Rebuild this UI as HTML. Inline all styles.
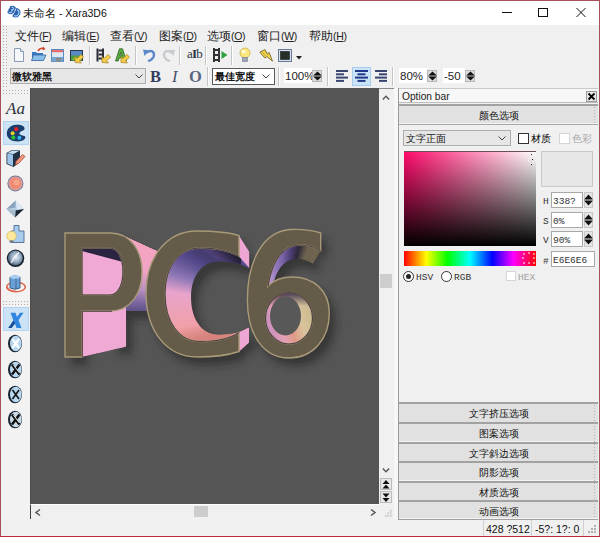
<!DOCTYPE html>
<html><head><meta charset="utf-8">
<style>
*{box-sizing:border-box;margin:0;padding:0}
html,body{width:600px;height:537px;overflow:hidden;background:#f0f0f0;font-family:"Liberation Sans",sans-serif;color:#000}
.a{position:absolute}
svg{position:absolute;overflow:visible}
.t{position:absolute;white-space:nowrap;font-size:12px;line-height:14px}
.sep{position:absolute;width:2px;height:19px;border-left:1px solid #c5c5c5;border-right:1px solid #fff}
.m{font-size:10.5px;letter-spacing:-0.3px}
.grip{position:absolute}
.btn{position:absolute;left:399px;width:198px;height:20px;background:#e3e3e3;border-top:2px solid #a8a8a8;text-align:center;font-size:12px;line-height:17px;color:#111}
.sp{position:absolute;width:10px;height:12px;background:#dcdcdc;border:1px solid #b8b8b8}
.fld{position:absolute;background:#fff;border:1px solid #a8a8a8;font-family:"Liberation Mono",monospace;font-size:9.5px;line-height:14px;padding-left:1px;padding-top:2px;color:#333}
.lbtn{position:absolute;left:398px;width:200px;height:20px;background:#e1e1e1;border-top:2px solid #a2a2a2;border-left:1px solid #9a9a9a;text-align:center;font-size:10px;line-height:19px;color:#111;font-weight:500;box-shadow:inset 0 -1px 0 #f4f4f4}
</style></head><body>
<svg width="0" height="0" style="position:absolute"><defs>
<pattern id="gp" width="3" height="3" patternUnits="userSpaceOnUse"><rect width="1" height="1" fill="#b0b0b0"/></pattern>
<symbol id="spin" viewBox="0 0 9 12"><path d="M4.5 0.5 L8.5 5 H0.5Z" fill="#111"/><rect x="0.5" y="5.5" width="8" height="1" fill="#111"/><path d="M0.5 7 H8.5 L4.5 11.5Z" fill="#111"/></symbol>
</defs></svg>
<!-- window border -->
<div class="a" style="left:0;top:0;width:600px;height:537px;border:1px solid #a8505a;border-bottom-color:#c02a3a;z-index:50"></div>

<!-- ============ TITLE BAR ============ -->
<div class="a" style="left:1px;top:1px;width:598px;height:24px;background:#fff"></div>
<svg style="left:6px;top:5px" width="16" height="14" viewBox="0 0 16 14">
  <g transform="rotate(30 8 7)">
  <path d="M2 3.5 Q4 1.5 7 2 Q8.5 3 7.5 5 Q9 6 8 8.5 Q6.5 11.5 3 11 Q1.5 10 2.5 8.5 Q1 7 2.5 5.5 Q1 4.5 2 3.5Z" fill="#2a5fae"/>
  <path d="M8 2 Q14 1 14.5 6.5 Q14.5 12 8.5 11.5 Q9.5 7 8 2Z" fill="#2a5fae"/>
  <path d="M3.5 4 Q6 3.2 6 4.8 Q5.8 6 4.5 6.3 Q6.3 6.6 6 8.2 Q5.5 10 3.5 9.5" stroke="#a8d4f4" stroke-width="1.1" fill="none"/>
  <path d="M9.5 3.5 Q13 3.5 13 6.8 Q13 10 10 10" stroke="#a8d4f4" stroke-width="1.1" fill="none"/>
  </g>
</svg>
<div class="t" style="left:23px;top:6px;font-size:10.5px;color:#111">未命名 - Xara3D6</div>
<!-- window controls -->
<div class="a" style="left:502px;top:12px;width:10px;height:1px;background:#111"></div>
<div class="a" style="left:538px;top:8px;width:10px;height:9px;border:1px solid #111"></div>
<svg style="left:576px;top:8px" width="10" height="9" viewBox="0 0 10 9"><path d="M0.5 0 L9.5 9 M9.5 0 L0.5 9" stroke="#111" stroke-width="1"/></svg>

<!-- ============ MENU BAR ============ -->
<svg style="left:3px;top:26px" width="4" height="62"><rect width="4" height="62" fill="url(#gp)"/></svg>
<div class="t" style="left:15px;top:29px;color:#222;font-size:11.5px">文件<span class="m">(<u>F</u>)</span></div>
<div class="t" style="left:62px;top:29px;color:#222;font-size:11.5px">编辑<span class="m">(<u>E</u>)</span></div>
<div class="t" style="left:110px;top:29px;color:#222;font-size:11.5px">查看<span class="m">(<u>V</u>)</span></div>
<div class="t" style="left:159px;top:29px;color:#222;font-size:11.5px">图案<span class="m">(<u>D</u>)</span></div>
<div class="t" style="left:207px;top:29px;color:#222;font-size:11.5px">选项<span class="m">(<u>O</u>)</span></div>
<div class="t" style="left:257px;top:29px;color:#222;font-size:11.5px">窗口<span class="m">(<u>W</u>)</span></div>
<div class="t" style="left:309px;top:29px;color:#222;font-size:11.5px">帮助<span class="m">(<u>H</u>)</span></div>

<!-- ============ TOOLBAR 1 ============ -->
<svg style="left:13px;top:48px" width="12" height="15" viewBox="0 0 12 15">
  <path d="M1.5 0.5 H7.5 L10.5 3.5 V13.5 H1.5Z" fill="#f4f8fc" stroke="#8a9ab0"/>
  <path d="M7.5 0.5 V3.5 H10.5" fill="#dde6f0" stroke="#8a9ab0"/>
</svg>
<svg style="left:31px;top:47px" width="16" height="15" viewBox="0 0 16 15">
  <path d="M1 5 H5 L6 6 H12 V13.5 H1Z" fill="#3a7ac0"/>
  <path d="M2.5 8 H15 L12.5 13.5 H0.5Z" fill="#8ac0ea" stroke="#3a6aa0" stroke-width="0.8"/>
  <path d="M7 4 Q9 0.5 13 1.5" stroke="#d04830" stroke-width="1.6" fill="none"/>
  <path d="M12 -0.5 L14.5 2 L11.5 3.5Z" fill="#d04830"/>
</svg>
<svg style="left:51px;top:49px" width="14" height="14" viewBox="0 0 14 14">
  <rect x="0.5" y="0.5" width="12" height="12" fill="#dfe9f4" stroke="#5a8cc0"/>
  <rect x="1" y="1" width="11" height="2.2" fill="#e86a6a"/>
  <rect x="1" y="8" width="11" height="4.5" fill="#78a4d0"/>
  <rect x="5" y="9" width="5" height="3.5" fill="#8a8a8a"/>
</svg>
<svg style="left:70px;top:50px" width="15" height="13" viewBox="0 0 15 13">
  <rect x="0.5" y="0.5" width="12" height="10" fill="#4aa040" stroke="#2a3a48"/>
  <rect x="1" y="1" width="11" height="4.5" fill="#5a88c8"/>
  <path d="M1 10.5 L5 6 L8 9 L12 5 V10.5Z" fill="#70b848"/>
  <path d="M5 12.5 V6.5 L7 8.5 L11 4.5 L13.5 7 L9.5 11 L11.5 13Z" fill="#f6cc48" stroke="#a08020" stroke-width="0.7"/>
</svg>
<div class="sep" style="left:89px;top:46px"></div>
<svg style="left:96px;top:48px" width="16" height="15" viewBox="0 0 16 15">
  <rect x="0.5" y="0.5" width="2" height="13" fill="#2a2f38"/>
  <rect x="6" y="0.5" width="2" height="13" fill="#2a2f38"/>
  <rect x="2.5" y="1.5" width="3.5" height="2" fill="#2a2f38"/><rect x="2.5" y="5.5" width="3.5" height="2" fill="#2a2f38"/><rect x="2.5" y="9.5" width="3.5" height="2" fill="#2a2f38"/>
  <path d="M6 14.5 V8.5 L8 10.5 L12 6.5 L14.5 9 L10.5 13 L12.5 15Z" fill="#f6cc48" stroke="#a08020" stroke-width="0.7"/>
</svg>
<svg style="left:115px;top:48px" width="16" height="15" viewBox="0 0 16 15">
  <path d="M0.5 13 L4.5 0.8 H7.5 L11.5 13 H8.8 L7.8 10 H4.2 L3.2 13Z M4.8 7.8 H7.2 L6 4Z" fill="#5cb040" stroke="#2a5a20" stroke-width="0.8"/>
  <path d="M6 14.5 V8.5 L8 10.5 L12 6.5 L14.5 9 L10.5 13 L12.5 15Z" fill="#f6cc48" stroke="#a08020" stroke-width="0.7"/>
</svg>
<div class="sep" style="left:135px;top:46px"></div>
<svg style="left:142px;top:48px" width="14" height="14" viewBox="0 0 14 14">
  <path d="M4 5 Q7.5 2 10.5 3.5 Q13 5.5 11.5 9 Q10 12 6 13" stroke="#5a88c8" stroke-width="2.3" fill="none"/>
  <path d="M1 1.5 L7 2.5 L2.5 8Z" fill="#5a88c8"/>
</svg>
<svg style="left:162px;top:48px" width="14" height="14" viewBox="0 0 14 14">
  <path d="M10 5 Q6.5 2 3.5 3.5 Q1 5.5 2.5 9 Q4 12 8 13" stroke="#c8ccd0" stroke-width="2.3" fill="none"/>
  <path d="M13 1.5 L7 2.5 L11.5 8Z" fill="#c8ccd0"/>
</svg>
<div class="sep" style="left:179px;top:46px"></div>
<div class="t" style="left:187px;top:47px;font-family:'Liberation Serif',serif;font-size:13px;color:#2a3444;letter-spacing:-0.8px">a<span style="font-weight:bold">I</span>b</div>
<div class="sep" style="left:205px;top:46px"></div>
<svg style="left:213px;top:48px" width="15" height="14" viewBox="0 0 15 14">
  <rect x="0" y="0" width="2" height="14" fill="#333"/><rect x="5" y="0" width="2" height="14" fill="#333"/>
  <rect x="2" y="1" width="3" height="2" fill="#333"/><rect x="2" y="6" width="3" height="2" fill="#333"/><rect x="2" y="11" width="3" height="2" fill="#333"/>
  <path d="M8.5 3 L14.5 7 L8.5 11Z" fill="#30a040"/>
</svg>
<div class="sep" style="left:231px;top:46px"></div>
<svg style="left:239px;top:47px" width="12" height="16" viewBox="0 0 12 16">
  <circle cx="6" cy="6" r="5" fill="#fbe880" stroke="#c8b040" stroke-width="0.8"/>
  <ellipse cx="4.5" cy="4.5" rx="2" ry="1.6" fill="#fffbe0"/>
  <rect x="3.5" y="10.5" width="5" height="4" fill="#a0a8b8" stroke="#707888" stroke-width="0.6"/>
</svg>
<svg style="left:259px;top:49px" width="15" height="13" viewBox="0 0 15 13">
  <path d="M0.8 3.2 L6 0.6 L8.2 4.6 L10.2 3.4 L13.5 12.2 L8 7.6 L5.8 9Z" fill="#f4d648" stroke="#6a5a28" stroke-width="0.8" stroke-linejoin="round"/>
  <path d="M3 3 L7 7.5 M6 2 L9.5 6.5" stroke="#8a7a40" stroke-width="0.6"/>
</svg>
<svg style="left:278px;top:49px" width="14" height="13" viewBox="0 0 14 13">
  <rect x="0.5" y="0.5" width="13" height="12" fill="#d4e0ee" stroke="#6a7a90"/>
  <rect x="2.5" y="2.5" width="9" height="8" fill="#263028" stroke="#1a1f24" stroke-width="0.6"/>
</svg>
<svg style="left:296px;top:56px" width="6" height="4" viewBox="0 0 6 4"><path d="M0 0 H6 L3 3.5Z" fill="#222"/></svg>

<!-- ============ TOOLBAR 2 ============ -->
<div class="a" style="left:10px;top:68px;width:136px;height:16px;background:#e6e6e6;border:1px solid #adadad"></div>
<div class="t" style="left:12px;top:70px;font-size:10px;font-weight:bold;color:#111">微软雅黑</div>
<svg style="left:135px;top:74px" width="8" height="5" viewBox="0 0 8 5"><path d="M0.5 0.5 L4 4 L7.5 0.5" stroke="#444" stroke-width="1" fill="none"/></svg>

<div class="t" style="left:150px;top:68px;font-family:'Liberation Serif',serif;font-size:16.5px;line-height:18px;font-weight:bold;color:#333c5c">B</div>
<div class="t" style="left:172px;top:68px;font-family:'Liberation Serif',serif;font-size:16.5px;line-height:18px;font-style:italic;color:#454f68">I</div>
<div class="t" style="left:189px;top:68px;font-family:'Liberation Serif',serif;font-size:16.5px;line-height:18px;font-weight:bold;color:#5a6580">O</div>
<div class="sep" style="left:207px;top:67px"></div>
<div class="a" style="left:212px;top:68px;width:63px;height:17px;background:#fff;border:1px solid #5a5a5a"></div>
<div class="t" style="left:215px;top:70px;font-size:10px;font-weight:bold;color:#111">最佳宽度</div>
<svg style="left:262px;top:74px" width="8" height="5" viewBox="0 0 8 5"><path d="M0.5 0.5 L4 4 L7.5 0.5" stroke="#444" stroke-width="1" fill="none"/></svg>
<div class="sep" style="left:278px;top:67px"></div>
<div class="a" style="left:284px;top:68px;width:28px;height:15px;background:#fff"></div>
<div class="t" style="left:285px;top:69px;font-size:11.5px;color:#222">100%</div>
<div class="sp" style="left:312px;top:70px"></div>
<svg style="left:313px;top:71px" width="9" height="10" viewBox="0 0 9 12" preserveAspectRatio="none"><use href="#spin"/></svg>
<div class="sep" style="left:327px;top:67px"></div>
<svg style="left:336px;top:70px" width="12" height="12" viewBox="0 0 12 12">
  <g fill="#3a4670"><rect x="0" y="0" width="12" height="2"/><rect x="0" y="3.3" width="8" height="2"/><rect x="0" y="6.6" width="12" height="2"/><rect x="0" y="9.9" width="8" height="2"/></g>
</svg>
<div class="a" style="left:352px;top:67px;width:19px;height:19px;background:#cce4f7;border:1px solid #a6cdef"></div>
<svg style="left:355px;top:70px" width="13" height="12" viewBox="0 0 13 12">
  <g fill="#1f3a8a"><rect x="0" y="0" width="13" height="2"/><rect x="2.5" y="3.3" width="8" height="2"/><rect x="0" y="6.6" width="13" height="2"/><rect x="2.5" y="9.9" width="8" height="2"/></g>
</svg>
<svg style="left:375px;top:70px" width="12" height="12" viewBox="0 0 12 12">
  <g fill="#3a4670"><rect x="0" y="0" width="12" height="2"/><rect x="4" y="3.3" width="8" height="2"/><rect x="0" y="6.6" width="12" height="2"/><rect x="4" y="9.9" width="8" height="2"/></g>
</svg>
<div class="sep" style="left:392px;top:67px"></div>
<div class="a" style="left:399px;top:68px;width:28px;height:15px;background:#fff"></div>
<div class="t" style="left:400px;top:69px;font-size:11.5px;color:#222">80%</div>
<div class="sp" style="left:427px;top:70px"></div>
<svg style="left:428px;top:71px" width="9" height="10" viewBox="0 0 9 12" preserveAspectRatio="none"><use href="#spin"/></svg>
<div class="a" style="left:443px;top:68px;width:22px;height:15px;background:#fff"></div>
<div class="t" style="left:444px;top:69px;font-size:11.5px;color:#222">-50</div>
<div class="sp" style="left:465px;top:70px"></div>
<svg style="left:466px;top:71px" width="9" height="10" viewBox="0 0 9 12" preserveAspectRatio="none"><use href="#spin"/></svg>

<!-- ============ LEFT TOOLBAR ============ -->
<div class="a" style="left:1px;top:88px;width:29px;height:431px;background:#f2f2f2"></div>
<svg style="left:3px;top:90px" width="26" height="6"><rect width="26" height="6" fill="url(#gp)"/></svg>
<div class="t" style="left:6px;top:100px;font-family:'Liberation Serif',serif;font-style:italic;font-size:17px;line-height:18px;color:#2a2f3a">Aa</div>
<div class="a" style="left:3px;top:121px;width:26px;height:24px;background:#cce2f5;border:1px solid #b2d4f0"></div>
<svg style="left:6px;top:124px" width="21" height="18" viewBox="0 0 21 18">
  <path d="M10 0.8 C15 0.3 19 2 18.5 5 C18 7 14 7 13.5 9 C13 11 16 11 18.5 12 C21 13.5 18 17.5 12 17.5 C5 17.5 0.8 14 0.8 9.5 C0.8 4.5 5 1.2 10 0.8Z" fill="#1b3e6e"/>
  <circle cx="10.2" cy="5.2" r="2.1" fill="#e8202a"/>
  <circle cx="6.6" cy="9.3" r="2" fill="#e6d030"/>
  <circle cx="7.3" cy="13.6" r="2.1" fill="#28c030"/>
  <circle cx="13.4" cy="13.8" r="2" fill="#30b8f0"/>
</svg>
<svg style="left:6px;top:149px" width="20" height="19" viewBox="0 0 20 19">
  <path d="M0.5 4 L6 1 L14 1.5 L14 13 L7.5 18 L0.5 15Z" fill="#1f2f44"/>
  <path d="M1.3 4.6 L7 5.5 L7 17 L1.3 14.6Z" fill="#9cc4e8"/>
  <path d="M1.3 4.2 L6.2 1.6 L13 2 L7.5 5Z" fill="#c8def2"/>
  <path d="M10 12.5 L16.5 5.5 L19 7.5 L12.5 14.5 L9.5 15.5Z" fill="#f29a80" stroke="#a84a3a" stroke-width="0.8"/>
</svg>
<svg style="left:6px;top:175px" width="18" height="17" viewBox="0 0 18 17">
  <circle cx="9.4" cy="8.4" r="8" fill="#7c6f88"/>
  <circle cx="9.4" cy="8.4" r="7" fill="#c8b8c8"/>
  <circle cx="9.4" cy="8.4" r="6.2" fill="#f08a72"/>
  <circle cx="10.5" cy="7.5" r="3" fill="#f6a48a"/>
</svg>
<svg style="left:6px;top:200px" width="19" height="18" viewBox="0 0 19 18">
  <path d="M9.5 0.5 L18 9 L9 17.5 L0.5 9Z" fill="#b8cce0"/>
  <path d="M9.5 0.5 L18 9 L11 9.5Z" fill="#dce8f4"/>
  <path d="M0.5 9 L9.5 7.5 L9.5 0.5Z" fill="#8aa4c0"/>
  <path d="M18 9 L9 17.5 L9.5 10.5Z" fill="#18242e"/>
  <path d="M0.5 9 L9 17.5 L9.5 10.5Z" fill="#a8bcd0"/>
</svg>
<svg style="left:6px;top:225px" width="19" height="18" viewBox="0 0 19 18">
  <path d="M8 0.5 H13 V6 H18 V17.5 H5 V6 H8Z" fill="#a8ccee" stroke="#4a6a90" stroke-width="0.9"/>
  <circle cx="5.5" cy="11" r="4.8" fill="#fbe89a" stroke="#c8b050" stroke-width="0.6"/>
  <rect x="3.5" y="15.5" width="4" height="2" fill="#707888"/>
</svg>
<svg style="left:6px;top:249px" width="19" height="19" viewBox="0 0 19 19">
  <defs><radialGradient id="sph" cx="0.55" cy="0.45" r="0.6"><stop offset="0" stop-color="#e8f0f8"/><stop offset="0.6" stop-color="#8ea4bc"/><stop offset="1" stop-color="#3a4a5c"/></radialGradient></defs>
  <circle cx="9.5" cy="9.3" r="8.7" fill="#16202a"/>
  <circle cx="9.3" cy="9" r="7.4" fill="url(#sph)"/>
  <path d="M5 14 Q9 7 13 3.5" stroke="#fff" stroke-width="1.4" fill="none" opacity="0.8"/>
</svg>
<svg style="left:6px;top:275px" width="20" height="18" viewBox="0 0 20 18">
  <ellipse cx="10" cy="12" rx="9.3" ry="4.8" fill="none" stroke="#e06850" stroke-width="1.6"/>
  <path d="M4 2 Q9 -0.5 14 2 V13 Q9 15.5 4 13Z" fill="#6aa0d8" stroke="#2a4a70" stroke-width="0.8"/>
  <ellipse cx="9" cy="2" rx="5" ry="1.8" fill="#a8cef0"/>
  <path d="M10 3.5 V14" stroke="#3a5a80" stroke-width="0.8"/>
  <path d="M1 12 Q2 16 10 16.5" stroke="#e06850" stroke-width="1.6" fill="none"/>
</svg>
<svg style="left:3px;top:301px" width="26" height="6"><rect width="26" height="6" fill="url(#gp)"/></svg>
<div class="a" style="left:3px;top:307px;width:26px;height:24px;background:#cce2f5;border:1px solid #b2d4f0"></div>
<svg style="left:8px;top:312px" width="16" height="17" viewBox="0 0 16 17">
  <path d="M2.5 0.8 H7.5 L9 5 L12 0.8 H15.5 L10.5 8 L13.5 16 H8.5 L7 11.5 L3.5 16 H0.3 L5.5 8.5Z" fill="#2f86e0"/>
  <path d="M7 11.5 L3.5 16 H0.3 L5.5 8.5Z" fill="#1a4c90"/>
</svg>
<svg style="left:7px;top:334px" width="16" height="19" viewBox="0 0 16 19">
  <ellipse cx="8" cy="9.5" rx="7" ry="8.7" fill="#16222e"/>
  <ellipse cx="8.8" cy="9.5" rx="5.8" ry="7.8" fill="#b8d8f2"/>
  <path d="M5.5 5 L12 14 M12 5 L5.5 14" stroke="#fff" stroke-width="2.2"/>
</svg>
<svg style="left:7px;top:360px" width="16" height="19" viewBox="0 0 16 19">
  <ellipse cx="8" cy="9.5" rx="7" ry="8.7" fill="#16222e"/>
  <ellipse cx="8.8" cy="9.5" rx="5.8" ry="7.8" fill="#b8d8f2"/>
  <path d="M5 4.5 L12.5 14.5 M12.5 4.5 L5 14.5" stroke="#111" stroke-width="2.4"/>
  <path d="M6.5 5 L12.5 13" stroke="#fff" stroke-width="0.9"/>
</svg>
<svg style="left:7px;top:385px" width="16" height="19" viewBox="0 0 16 19">
  <ellipse cx="8" cy="9.5" rx="7" ry="8.7" fill="#16222e"/>
  <ellipse cx="8.8" cy="9.5" rx="5.8" ry="7.8" fill="#b8d8f2"/>
  <path d="M5.5 5 L12 14 M12 5 L5.5 14" stroke="#111" stroke-width="1.6"/>
</svg>
<svg style="left:7px;top:410px" width="16" height="19" viewBox="0 0 16 19">
  <ellipse cx="8" cy="9.5" rx="7" ry="8.7" fill="#16222e"/>
  <ellipse cx="8.8" cy="9.5" rx="5.8" ry="7.8" fill="#c8dcec"/>
  <path d="M5 4.5 L12.5 14.5 M12.5 4.5 L5 14.5" stroke="#111" stroke-width="2.6"/>
  <path d="M6.5 5 L12.5 13" stroke="#fff" stroke-width="1"/>
</svg>


<!-- ============ CANVAS ============ -->
<div class="a" style="left:30px;top:88px;width:349px;height:416px;background:#555555;border-left:1px solid #4c4c4c"></div>
<svg style="left:0;top:0" width="600" height="537" viewBox="0 0 600 537">
<defs>
<clipPath id="cv"><rect x="31" y="88" width="348" height="416"/></clipPath>
<path id="gP" d="M65,233 L110,233 C131,233 142,251 142,272 C142,293 131,311 110,311 L82,311 L82,357 L65,357 Z M82,248 L110,248 C118,248 123,258 123,271.5 C123,285 118,295 110,295 L82,295 Z" fill-rule="evenodd"/>
<path id="gC" d="M239,235.6 C228,232 212,231 197,231 C166,231 146,258 146,293.5 C146,330 166,357 197,357 C214,357 229,355 239,351.5 L239,332.6 C230,339 216,341.5 200,341.5 C179,341.5 165,322 165,294 C165,266 179,248 200,248 C216,248 230,251 239,256.5 Z"/>
<path id="g6" d="M320.7,233 C310,229.5 300,229 290,229.5 C262,232 247.4,262 247.4,300 C247.4,337 265,358 289,358 C313,358 329.3,339 329.3,313 C329.3,290 313,277 292,277 C282,277 274,280 268,286 C272,262 282,245 300,245 C308,245 315,247 320.7,251 Z M265.5,318.3 A23.5,25.7 0 1,0 312.5,318.3 A23.5,25.7 0 1,0 265.5,318.3 Z" fill-rule="evenodd"/>
<linearGradient id="lgP" gradientUnits="userSpaceOnUse" x1="0" y1="233" x2="0" y2="357"><stop offset="0" stop-color="#f0a8d4"/><stop offset="1" stop-color="#f0a8d4"/></linearGradient>
<linearGradient id="lgPr" gradientUnits="userSpaceOnUse" x1="0" y1="236" x2="0" y2="314"><stop offset="0" stop-color="#f4a4c0"/><stop offset="0.45" stop-color="#f2a2c4"/><stop offset="0.68" stop-color="#b890c0"/><stop offset="0.85" stop-color="#7a66a0"/><stop offset="1" stop-color="#54487a"/></linearGradient>
<linearGradient id="lgCt" gradientUnits="userSpaceOnUse" x1="195" y1="0" x2="238" y2="0"><stop offset="0" stop-color="#5a4a88" stop-opacity="0"/><stop offset="0.5" stop-color="#3a3058" stop-opacity="0.8"/><stop offset="1" stop-color="#1c1a28" stop-opacity="1"/></linearGradient>
<clipPath id="cct"><rect x="195" y="235" width="46" height="32"/></clipPath>
<clipPath id="cpr"><rect x="126.6" y="200" width="60" height="120"/></clipPath>
<linearGradient id="lgC" gradientUnits="userSpaceOnUse" x1="0" y1="240" x2="0" y2="350"><stop offset="0" stop-color="#2c2848"/><stop offset="0.12" stop-color="#54488a"/><stop offset="0.3" stop-color="#8e78b6"/><stop offset="0.46" stop-color="#e8a4cc"/><stop offset="0.8" stop-color="#f0a0a8"/><stop offset="1" stop-color="#c87060"/></linearGradient>
<linearGradient id="lg6" gradientUnits="userSpaceOnUse" x1="268" y1="290" x2="322" y2="250"><stop offset="0" stop-color="#dca4d4"/><stop offset="0.2" stop-color="#a488c4"/><stop offset="0.5" stop-color="#7a64a8"/><stop offset="0.68" stop-color="#4a3c70"/><stop offset="0.78" stop-color="#2e2838"/><stop offset="0.88" stop-color="#6b614e"/><stop offset="1" stop-color="#70654f"/></linearGradient>
<linearGradient id="lg6r" gradientUnits="userSpaceOnUse" x1="266" y1="322" x2="312" y2="306"><stop offset="0" stop-color="#c890c0"/><stop offset="0.25" stop-color="#e4a0b4"/><stop offset="0.45" stop-color="#e09a88"/><stop offset="0.68" stop-color="#d8c49c"/><stop offset="1" stop-color="#c8b88e"/></linearGradient><linearGradient id="lg6t" gradientUnits="userSpaceOnUse" x1="0" y1="292" x2="0" y2="306"><stop offset="0" stop-color="#3c3050" stop-opacity="1"/><stop offset="1" stop-color="#3c3050" stop-opacity="0"/></linearGradient>
<filter id="blur" x="-20%" y="-20%" width="140%" height="140%"><feGaussianBlur stdDeviation="4"/></filter>
</defs>
<g clip-path="url(#cv)">
<g filter="url(#blur)" opacity="0.55" transform="translate(6,8)" fill="#1a1a1a">
<use href="#gP"/>
<use href="#gP" transform="matrix(0.7830,0,0,0.7830,61.845,67.270)"/>
<use href="#gC"/>
<use href="#gC" transform="matrix(0.7830,0,0,0.7830,61.845,67.270)"/>
<use href="#g6"/>
<use href="#g6" transform="matrix(0.7830,0,0,0.7830,61.845,67.270)"/>
</g>
<g fill="url(#lgP)">
<use href="#gP" transform="matrix(0.7830,0,0,0.7830,61.845,67.270)"/>
<use href="#gP" transform="matrix(0.7908,0,0,0.7908,59.636,64.867)"/>
<use href="#gP" transform="matrix(0.7985,0,0,0.7985,57.428,62.465)"/>
<use href="#gP" transform="matrix(0.8063,0,0,0.8063,55.219,60.062)"/>
<use href="#gP" transform="matrix(0.8140,0,0,0.8140,53.010,57.660)"/>
<use href="#gP" transform="matrix(0.8217,0,0,0.8217,50.801,55.258)"/>
<use href="#gP" transform="matrix(0.8295,0,0,0.8295,48.592,52.855)"/>
<use href="#gP" transform="matrix(0.8373,0,0,0.8373,46.384,50.452)"/>
<use href="#gP" transform="matrix(0.8450,0,0,0.8450,44.175,48.050)"/>
<use href="#gP" transform="matrix(0.8528,0,0,0.8528,41.966,45.648)"/>
<use href="#gP" transform="matrix(0.8605,0,0,0.8605,39.757,43.245)"/>
<use href="#gP" transform="matrix(0.8683,0,0,0.8683,37.549,40.842)"/>
<use href="#gP" transform="matrix(0.8760,0,0,0.8760,35.340,38.440)"/>
<use href="#gP" transform="matrix(0.8838,0,0,0.8838,33.131,36.037)"/>
<use href="#gP" transform="matrix(0.8915,0,0,0.8915,30.922,33.635)"/>
<use href="#gP" transform="matrix(0.8992,0,0,0.8992,28.714,31.233)"/>
<use href="#gP" transform="matrix(0.9070,0,0,0.9070,26.505,28.830)"/>
<use href="#gP" transform="matrix(0.9148,0,0,0.9148,24.296,26.427)"/>
<use href="#gP" transform="matrix(0.9225,0,0,0.9225,22.087,24.025)"/>
<use href="#gP" transform="matrix(0.9303,0,0,0.9303,19.879,21.622)"/>
<use href="#gP" transform="matrix(0.9380,0,0,0.9380,17.670,19.220)"/>
<use href="#gP" transform="matrix(0.9458,0,0,0.9458,15.461,16.817)"/>
<use href="#gP" transform="matrix(0.9535,0,0,0.9535,13.252,14.415)"/>
<use href="#gP" transform="matrix(0.9613,0,0,0.9613,11.044,12.012)"/>
<use href="#gP" transform="matrix(0.9690,0,0,0.9690,8.835,9.610)"/>
<use href="#gP" transform="matrix(0.9768,0,0,0.9768,6.626,7.207)"/>
<use href="#gP" transform="matrix(0.9845,0,0,0.9845,4.417,4.805)"/>
<use href="#gP" transform="matrix(0.9923,0,0,0.9923,2.209,2.402)"/>
<use href="#gP" transform="matrix(1.0000,0,0,1.0000,0.000,0.000)"/>
</g>
<g fill="url(#lgPr)" clip-path="url(#cpr)">
<use href="#gP" transform="matrix(0.7830,0,0,0.7830,61.845,67.270)"/>
<use href="#gP" transform="matrix(0.7908,0,0,0.7908,59.636,64.867)"/>
<use href="#gP" transform="matrix(0.7985,0,0,0.7985,57.428,62.465)"/>
<use href="#gP" transform="matrix(0.8063,0,0,0.8063,55.219,60.062)"/>
<use href="#gP" transform="matrix(0.8140,0,0,0.8140,53.010,57.660)"/>
<use href="#gP" transform="matrix(0.8217,0,0,0.8217,50.801,55.258)"/>
<use href="#gP" transform="matrix(0.8295,0,0,0.8295,48.592,52.855)"/>
<use href="#gP" transform="matrix(0.8373,0,0,0.8373,46.384,50.452)"/>
<use href="#gP" transform="matrix(0.8450,0,0,0.8450,44.175,48.050)"/>
<use href="#gP" transform="matrix(0.8528,0,0,0.8528,41.966,45.648)"/>
<use href="#gP" transform="matrix(0.8605,0,0,0.8605,39.757,43.245)"/>
<use href="#gP" transform="matrix(0.8683,0,0,0.8683,37.549,40.842)"/>
<use href="#gP" transform="matrix(0.8760,0,0,0.8760,35.340,38.440)"/>
<use href="#gP" transform="matrix(0.8838,0,0,0.8838,33.131,36.037)"/>
<use href="#gP" transform="matrix(0.8915,0,0,0.8915,30.922,33.635)"/>
<use href="#gP" transform="matrix(0.8992,0,0,0.8992,28.714,31.233)"/>
<use href="#gP" transform="matrix(0.9070,0,0,0.9070,26.505,28.830)"/>
<use href="#gP" transform="matrix(0.9148,0,0,0.9148,24.296,26.427)"/>
<use href="#gP" transform="matrix(0.9225,0,0,0.9225,22.087,24.025)"/>
<use href="#gP" transform="matrix(0.9303,0,0,0.9303,19.879,21.622)"/>
<use href="#gP" transform="matrix(0.9380,0,0,0.9380,17.670,19.220)"/>
<use href="#gP" transform="matrix(0.9458,0,0,0.9458,15.461,16.817)"/>
<use href="#gP" transform="matrix(0.9535,0,0,0.9535,13.252,14.415)"/>
<use href="#gP" transform="matrix(0.9613,0,0,0.9613,11.044,12.012)"/>
<use href="#gP" transform="matrix(0.9690,0,0,0.9690,8.835,9.610)"/>
<use href="#gP" transform="matrix(0.9768,0,0,0.9768,6.626,7.207)"/>
<use href="#gP" transform="matrix(0.9845,0,0,0.9845,4.417,4.805)"/>
<use href="#gP" transform="matrix(0.9923,0,0,0.9923,2.209,2.402)"/>
<use href="#gP" transform="matrix(1.0000,0,0,1.0000,0.000,0.000)"/>
</g>
<path d="M82,248 L110,248 C116,248 120,253 123,262 L82,251Z" fill="#2a2440"/>
<g fill="url(#lgC)">
<use href="#gC" transform="matrix(0.7830,0,0,0.7830,61.845,67.270)"/>
<use href="#gC" transform="matrix(0.7908,0,0,0.7908,59.636,64.867)"/>
<use href="#gC" transform="matrix(0.7985,0,0,0.7985,57.428,62.465)"/>
<use href="#gC" transform="matrix(0.8063,0,0,0.8063,55.219,60.062)"/>
<use href="#gC" transform="matrix(0.8140,0,0,0.8140,53.010,57.660)"/>
<use href="#gC" transform="matrix(0.8217,0,0,0.8217,50.801,55.258)"/>
<use href="#gC" transform="matrix(0.8295,0,0,0.8295,48.592,52.855)"/>
<use href="#gC" transform="matrix(0.8373,0,0,0.8373,46.384,50.452)"/>
<use href="#gC" transform="matrix(0.8450,0,0,0.8450,44.175,48.050)"/>
<use href="#gC" transform="matrix(0.8528,0,0,0.8528,41.966,45.648)"/>
<use href="#gC" transform="matrix(0.8605,0,0,0.8605,39.757,43.245)"/>
<use href="#gC" transform="matrix(0.8683,0,0,0.8683,37.549,40.842)"/>
<use href="#gC" transform="matrix(0.8760,0,0,0.8760,35.340,38.440)"/>
<use href="#gC" transform="matrix(0.8838,0,0,0.8838,33.131,36.037)"/>
<use href="#gC" transform="matrix(0.8915,0,0,0.8915,30.922,33.635)"/>
<use href="#gC" transform="matrix(0.8992,0,0,0.8992,28.714,31.233)"/>
<use href="#gC" transform="matrix(0.9070,0,0,0.9070,26.505,28.830)"/>
<use href="#gC" transform="matrix(0.9148,0,0,0.9148,24.296,26.427)"/>
<use href="#gC" transform="matrix(0.9225,0,0,0.9225,22.087,24.025)"/>
<use href="#gC" transform="matrix(0.9303,0,0,0.9303,19.879,21.622)"/>
<use href="#gC" transform="matrix(0.9380,0,0,0.9380,17.670,19.220)"/>
<use href="#gC" transform="matrix(0.9458,0,0,0.9458,15.461,16.817)"/>
<use href="#gC" transform="matrix(0.9535,0,0,0.9535,13.252,14.415)"/>
<use href="#gC" transform="matrix(0.9613,0,0,0.9613,11.044,12.012)"/>
<use href="#gC" transform="matrix(0.9690,0,0,0.9690,8.835,9.610)"/>
<use href="#gC" transform="matrix(0.9768,0,0,0.9768,6.626,7.207)"/>
<use href="#gC" transform="matrix(0.9845,0,0,0.9845,4.417,4.805)"/>
<use href="#gC" transform="matrix(0.9923,0,0,0.9923,2.209,2.402)"/>
<use href="#gC" transform="matrix(1.0000,0,0,1.0000,0.000,0.000)"/>
</g>
<g fill="url(#lgCt)" clip-path="url(#cct)">
<use href="#gC" transform="matrix(0.7830,0,0,0.7830,61.845,67.270)"/>
<use href="#gC" transform="matrix(0.7985,0,0,0.7985,57.428,62.465)"/>
<use href="#gC" transform="matrix(0.8140,0,0,0.8140,53.010,57.660)"/>
<use href="#gC" transform="matrix(0.8295,0,0,0.8295,48.592,52.855)"/>
<use href="#gC" transform="matrix(0.8450,0,0,0.8450,44.175,48.050)"/>
<use href="#gC" transform="matrix(0.8605,0,0,0.8605,39.757,43.245)"/>
<use href="#gC" transform="matrix(0.8760,0,0,0.8760,35.340,38.440)"/>
<use href="#gC" transform="matrix(0.8915,0,0,0.8915,30.922,33.635)"/>
<use href="#gC" transform="matrix(0.9070,0,0,0.9070,26.505,28.830)"/>
<use href="#gC" transform="matrix(0.9225,0,0,0.9225,22.087,24.025)"/>
<use href="#gC" transform="matrix(0.9380,0,0,0.9380,17.670,19.220)"/>
<use href="#gC" transform="matrix(0.9535,0,0,0.9535,13.252,14.415)"/>
<use href="#gC" transform="matrix(0.9690,0,0,0.9690,8.835,9.610)"/>
<use href="#gC" transform="matrix(0.9845,0,0,0.9845,4.417,4.805)"/>
<use href="#gC" transform="matrix(1.0000,0,0,1.0000,0.000,0.000)"/>
</g>
<g fill="url(#lg6)">
<use href="#g6" transform="matrix(0.7830,0,0,0.7830,61.845,67.270)"/>
<use href="#g6" transform="matrix(0.7908,0,0,0.7908,59.636,64.867)"/>
<use href="#g6" transform="matrix(0.7985,0,0,0.7985,57.428,62.465)"/>
<use href="#g6" transform="matrix(0.8063,0,0,0.8063,55.219,60.062)"/>
<use href="#g6" transform="matrix(0.8140,0,0,0.8140,53.010,57.660)"/>
<use href="#g6" transform="matrix(0.8217,0,0,0.8217,50.801,55.258)"/>
<use href="#g6" transform="matrix(0.8295,0,0,0.8295,48.592,52.855)"/>
<use href="#g6" transform="matrix(0.8373,0,0,0.8373,46.384,50.452)"/>
<use href="#g6" transform="matrix(0.8450,0,0,0.8450,44.175,48.050)"/>
<use href="#g6" transform="matrix(0.8528,0,0,0.8528,41.966,45.648)"/>
<use href="#g6" transform="matrix(0.8605,0,0,0.8605,39.757,43.245)"/>
<use href="#g6" transform="matrix(0.8683,0,0,0.8683,37.549,40.842)"/>
<use href="#g6" transform="matrix(0.8760,0,0,0.8760,35.340,38.440)"/>
<use href="#g6" transform="matrix(0.8838,0,0,0.8838,33.131,36.037)"/>
<use href="#g6" transform="matrix(0.8915,0,0,0.8915,30.922,33.635)"/>
<use href="#g6" transform="matrix(0.8992,0,0,0.8992,28.714,31.233)"/>
<use href="#g6" transform="matrix(0.9070,0,0,0.9070,26.505,28.830)"/>
<use href="#g6" transform="matrix(0.9148,0,0,0.9148,24.296,26.427)"/>
<use href="#g6" transform="matrix(0.9225,0,0,0.9225,22.087,24.025)"/>
<use href="#g6" transform="matrix(0.9303,0,0,0.9303,19.879,21.622)"/>
<use href="#g6" transform="matrix(0.9380,0,0,0.9380,17.670,19.220)"/>
<use href="#g6" transform="matrix(0.9458,0,0,0.9458,15.461,16.817)"/>
<use href="#g6" transform="matrix(0.9535,0,0,0.9535,13.252,14.415)"/>
<use href="#g6" transform="matrix(0.9613,0,0,0.9613,11.044,12.012)"/>
<use href="#g6" transform="matrix(0.9690,0,0,0.9690,8.835,9.610)"/>
<use href="#g6" transform="matrix(0.9768,0,0,0.9768,6.626,7.207)"/>
<use href="#g6" transform="matrix(0.9845,0,0,0.9845,4.417,4.805)"/>
<use href="#g6" transform="matrix(0.9923,0,0,0.9923,2.209,2.402)"/>
<use href="#g6" transform="matrix(1.0000,0,0,1.0000,0.000,0.000)"/>
</g>
<ellipse cx="289" cy="318.3" rx="23.5" ry="25.7" fill="url(#lg6r)"/>
<ellipse cx="289" cy="318.3" rx="23.5" ry="25.7" fill="url(#lg6t)"/>
<ellipse cx="285.5" cy="316" rx="15.5" ry="19.5" fill="#585858"/>
<path d="M239,235.6 L249.2,251.7 L249.2,267.8 L239,256.5Z M239,332.6 L249,327.7 L249,342.6 L239,351.5Z" fill="#eea6d4"/>
<g fill="#655b49" stroke="#a89a78" stroke-width="1.4">
<use href="#gP"/>
<use href="#gC"/>
<use href="#g6"/>
</g>
<g fill="none" stroke="#3c3038" stroke-width="1.1" opacity="0.85">
<path d="M82,248 L110,248 C118,248 123,258 123,271.5 C123,285 118,295 110,295 L82,295 Z"/>
<path d="M112,311.3 L82.3,311.3 L82.3,357"/>
<path d="M239,332.6 C230,339 216,341.5 200,341.5 C179,341.5 165,322 165,294 C165,266 179,248 200,248 C216,248 230,251 239,256.5"/>
<path d="M268,286 C272,262 282,245 300,245 C308,245 315,247 320.7,251"/>
<path d="M265.5,318.3 A23.5,25.7 0 1,0 312.5,318.3 A23.5,25.7 0 1,0 265.5,318.3 Z"/>
</g>
</g></svg>

<!-- ============ SCROLLBARS ============ -->
<div class="a" style="left:379px;top:88px;width:15px;height:416px;background:#f0f0f0;border-top:1px solid #8a8a8a"></div>
<svg style="left:382px;top:95px" width="8" height="5" viewBox="0 0 8 5"><path d="M0.8 4.5 L4 1.2 L7.2 4.5" stroke="#555" stroke-width="1.3" fill="none"/></svg>
<div class="a" style="left:380px;top:274px;width:12px;height:14px;background:#cdcdcd"></div>
<svg style="left:382px;top:468px" width="8" height="5" viewBox="0 0 8 5"><path d="M0.8 0.5 L4 3.8 L7.2 0.5" stroke="#555" stroke-width="1.3" fill="none"/></svg>
<div class="a" style="left:380px;top:478px;width:12px;height:12px;background:#e8e8e8;border:1px solid #bdbdbd"></div>
<svg style="left:382px;top:480px" width="8" height="9" viewBox="0 0 8 9"><path d="M4 0 L7.5 4 H0.5Z" fill="#111"/><path d="M4 4.5 L7.5 8.5 H0.5Z" fill="#111"/><rect x="0.5" y="4" width="7" height="0.6" fill="#e8e8e8"/></svg>
<div class="a" style="left:380px;top:491px;width:12px;height:12px;background:#e8e8e8;border:1px solid #bdbdbd"></div>
<svg style="left:382px;top:493px" width="8" height="9" viewBox="0 0 8 9"><path d="M0.5 0.5 H7.5 L4 4.5Z" fill="#111"/><path d="M0.5 5 H7.5 L4 9Z" fill="#111"/></svg>

<div class="a" style="left:30px;top:504px;width:349px;height:15px;background:#f0f0f0;border-top:1px solid #fff;border-left:1px solid #404040"></div>
<svg style="left:35px;top:509px" width="6" height="7" viewBox="0 0 6 7"><path d="M5 0.5 L1 3.5 L5 6.5" stroke="#555" stroke-width="1.5" fill="none"/></svg>
<div class="a" style="left:194px;top:506px;width:14px;height:11px;background:#cdcdcd"></div>
<svg style="left:370px;top:509px" width="6" height="7" viewBox="0 0 6 7"><path d="M1 0.5 L5 3.5 L1 6.5" stroke="#555" stroke-width="1.5" fill="none"/></svg>
<div class="a" style="left:394px;top:88px;width:4px;height:431px;background:#f7f7f7"></div>

<!-- ============ OPTION BAR ============ -->
<div class="a" style="left:398px;top:88px;width:1px;height:431px;background:#9a9a9a"></div>
<div class="a" style="left:399px;top:88px;width:199px;height:15px;background:#f7f7f7;border-top:1px solid #c8c8c8;border-bottom:1px solid #bdbdbd"></div>
<div class="t" style="left:402px;top:90px;font-size:10.2px;color:#222">Option bar</div>
<div class="a" style="left:586px;top:91px;width:11px;height:11px;background:#e8e8e8;border:1px solid #9a9a9a"></div>
<svg style="left:588px;top:93px" width="7" height="7" viewBox="0 0 7 7"><path d="M0.5 0.5 L6.5 6.5 M6.5 0.5 L0.5 6.5" stroke="#000" stroke-width="1.8"/></svg>

<div class="lbtn" style="top:104px;height:21px;border-bottom:1px solid #a8a8a8">颜色选项</div>
<!-- PANEL -->
<div class="a" style="left:403px;top:130px;width:108px;height:16px;background:#e6e6e6;border:1px solid #adadad"></div>
<div class="t" style="left:406px;top:132px;font-size:10.2px;font-weight:500;color:#111">文字正面</div>
<svg style="left:498px;top:136px" width="8" height="5" viewBox="0 0 8 5"><path d="M0.5 0.5 L4 4 L7.5 0.5" stroke="#444" stroke-width="1" fill="none"/></svg>
<div class="a" style="left:518px;top:133px;width:11px;height:11px;background:#fff;border:1px solid #333"></div>
<div class="t" style="left:531px;top:132px;font-size:10.2px;font-weight:500">材质</div>
<div class="a" style="left:559px;top:133px;width:11px;height:11px;background:#fff;border:1px solid #d5d5d5"></div>
<div class="t" style="left:572px;top:132px;font-size:10.2px;font-weight:500;color:#a8a8a8">色彩</div>

<div class="a" style="left:404px;top:151px;width:132px;height:95px;border-top:1px solid #6a5058;background:linear-gradient(to bottom,rgba(0,0,0,0),#000),linear-gradient(to right,#ff0a6a,#fff)"></div>
<svg style="left:528px;top:154px" width="8" height="12" viewBox="0 0 8 12"><g fill="none" stroke="#fff" stroke-width="1" stroke-dasharray="1.5 1.5"><circle cx="4" cy="6" r="3.5"/></g><g fill="#222"><rect x="3" y="0" width="1" height="1"/><rect x="4" y="5" width="1" height="1"/><rect x="3" y="10" width="1" height="1"/></g></svg>
<div class="a" style="left:541px;top:151px;width:52px;height:36px;background:#e6e6e6;border:1px solid #c8c8c8"></div>
<div class="a" style="left:404px;top:251px;width:132px;height:15px;background:linear-gradient(to right,#f00 0%,#ff0 17%,#0f0 33%,#0ff 50%,#00f 67%,#f0f 83%,#f00 100%)"></div>
<svg style="left:521px;top:252px" width="15" height="13" viewBox="0 0 15 13"><g fill="none" stroke="#fff" stroke-width="1.2"><path d="M2 2 h2 M7 1 h2 M12 2 h2 M1 6 h2 M12 6 h2 M2 11 h2 M7 11 h2 M12 11 h2"/></g></svg>

<div class="t" style="left:543px;top:195px;font-family:'Liberation Mono',monospace;font-size:9.5px;color:#333">H</div>
<div class="fld" style="left:551px;top:192px;width:32px;height:16px">338?</div>
<div class="sp" style="left:584px;top:192px;height:16px;width:9px;background:#e4e4e4;border-color:#c8c8c8"></div><svg style="left:584px;top:194px" width="9" height="12" viewBox="0 0 9 12"><use href="#spin"/></svg>
<div class="t" style="left:543px;top:215px;font-family:'Liberation Mono',monospace;font-size:9.5px;color:#333">S</div>
<div class="fld" style="left:551px;top:212px;width:32px;height:16px">0%</div>
<div class="sp" style="left:584px;top:212px;height:16px;width:9px;background:#e4e4e4;border-color:#c8c8c8"></div><svg style="left:584px;top:214px" width="9" height="12" viewBox="0 0 9 12"><use href="#spin"/></svg>
<div class="t" style="left:543px;top:234px;font-family:'Liberation Mono',monospace;font-size:9.5px;color:#333">V</div>
<div class="fld" style="left:551px;top:231px;width:32px;height:16px">90%</div>
<div class="sp" style="left:584px;top:231px;height:16px;width:9px;background:#e4e4e4;border-color:#c8c8c8"></div><svg style="left:584px;top:233px" width="9" height="12" viewBox="0 0 9 12"><use href="#spin"/></svg>
<div class="t" style="left:543px;top:255px;font-family:'Liberation Mono',monospace;font-size:9.5px;color:#333">#</div>
<div class="fld" style="left:551px;top:251px;width:44px;height:16px">E6E6E6</div>

<div class="a" style="left:403px;top:271px;width:11px;height:11px;border-radius:50%;background:#fff;border:1px solid #333"></div>
<div class="a" style="left:406px;top:274px;width:5px;height:5px;border-radius:50%;background:#222"></div>
<div class="t" style="left:416px;top:271px;font-family:'Liberation Mono',monospace;font-size:9.5px;color:#333">HSV</div>
<div class="a" style="left:441px;top:271px;width:11px;height:11px;border-radius:50%;background:#fff;border:1px solid #333"></div>
<div class="t" style="left:454px;top:271px;font-family:'Liberation Mono',monospace;font-size:9.5px;color:#333">RGB</div>
<div class="a" style="left:506px;top:271px;width:10px;height:10px;background:#fff;border:1px solid #d5d5d5"></div>
<div class="t" style="left:518px;top:271px;font-family:'Liberation Mono',monospace;font-size:9.5px;color:#a0a0a0">HEX</div>

<div class="lbtn" style="top:402px;height:21px">文字挤压选项</div>
<div class="lbtn" style="top:422px">图案选项</div>
<div class="lbtn" style="top:442px">文字斜边选项</div>
<div class="lbtn" style="top:461px">阴影选项</div>
<div class="lbtn" style="top:481px">材质选项</div>
<div class="lbtn" style="top:500px;height:20px;border-bottom:1px solid #a0a0a0">动画选项</div>

<svg style="left:594px;top:107px" width="2" height="16"><rect width="2" height="16" fill="url(#gp)"/></svg>
<svg style="left:594px;top:405px" width="2" height="112"><rect width="2" height="112" fill="url(#gp)"/></svg>
<!-- ============ STATUS BAR ============ -->
<div class="a" style="left:483px;top:520px;width:1px;height:16px;background:#d0d0d0"></div>
<div class="a" style="left:531px;top:520px;width:1px;height:16px;background:#d0d0d0"></div>
<div class="a" style="left:583px;top:520px;width:1px;height:16px;background:#d0d0d0"></div>
<svg style="left:587px;top:524px" width="10" height="10" viewBox="0 0 10 10"><g fill="#b0b0b0"><rect x="7" y="1" width="2" height="2"/><rect x="4" y="4" width="2" height="2"/><rect x="7" y="4" width="2" height="2"/><rect x="1" y="7" width="2" height="2"/><rect x="4" y="7" width="2" height="2"/><rect x="7" y="7" width="2" height="2"/></g></svg>
<svg style="left:383px;top:508px" width="10" height="10" viewBox="0 0 10 10"><g fill="#c8c8c8" transform="translate(1,1) scale(0.85)"><rect x="7" y="1" width="2" height="2"/><rect x="4" y="4" width="2" height="2"/><rect x="7" y="4" width="2" height="2"/><rect x="1" y="7" width="2" height="2"/><rect x="4" y="7" width="2" height="2"/><rect x="7" y="7" width="2" height="2"/></g></svg>
<div class="t" style="left:486px;top:522px;font-size:10.5px;color:#111">428 ?512</div>
<div class="t" style="left:535px;top:522px;font-size:10.5px;color:#111">-5?: 1?: 0</div>
</body></html>
